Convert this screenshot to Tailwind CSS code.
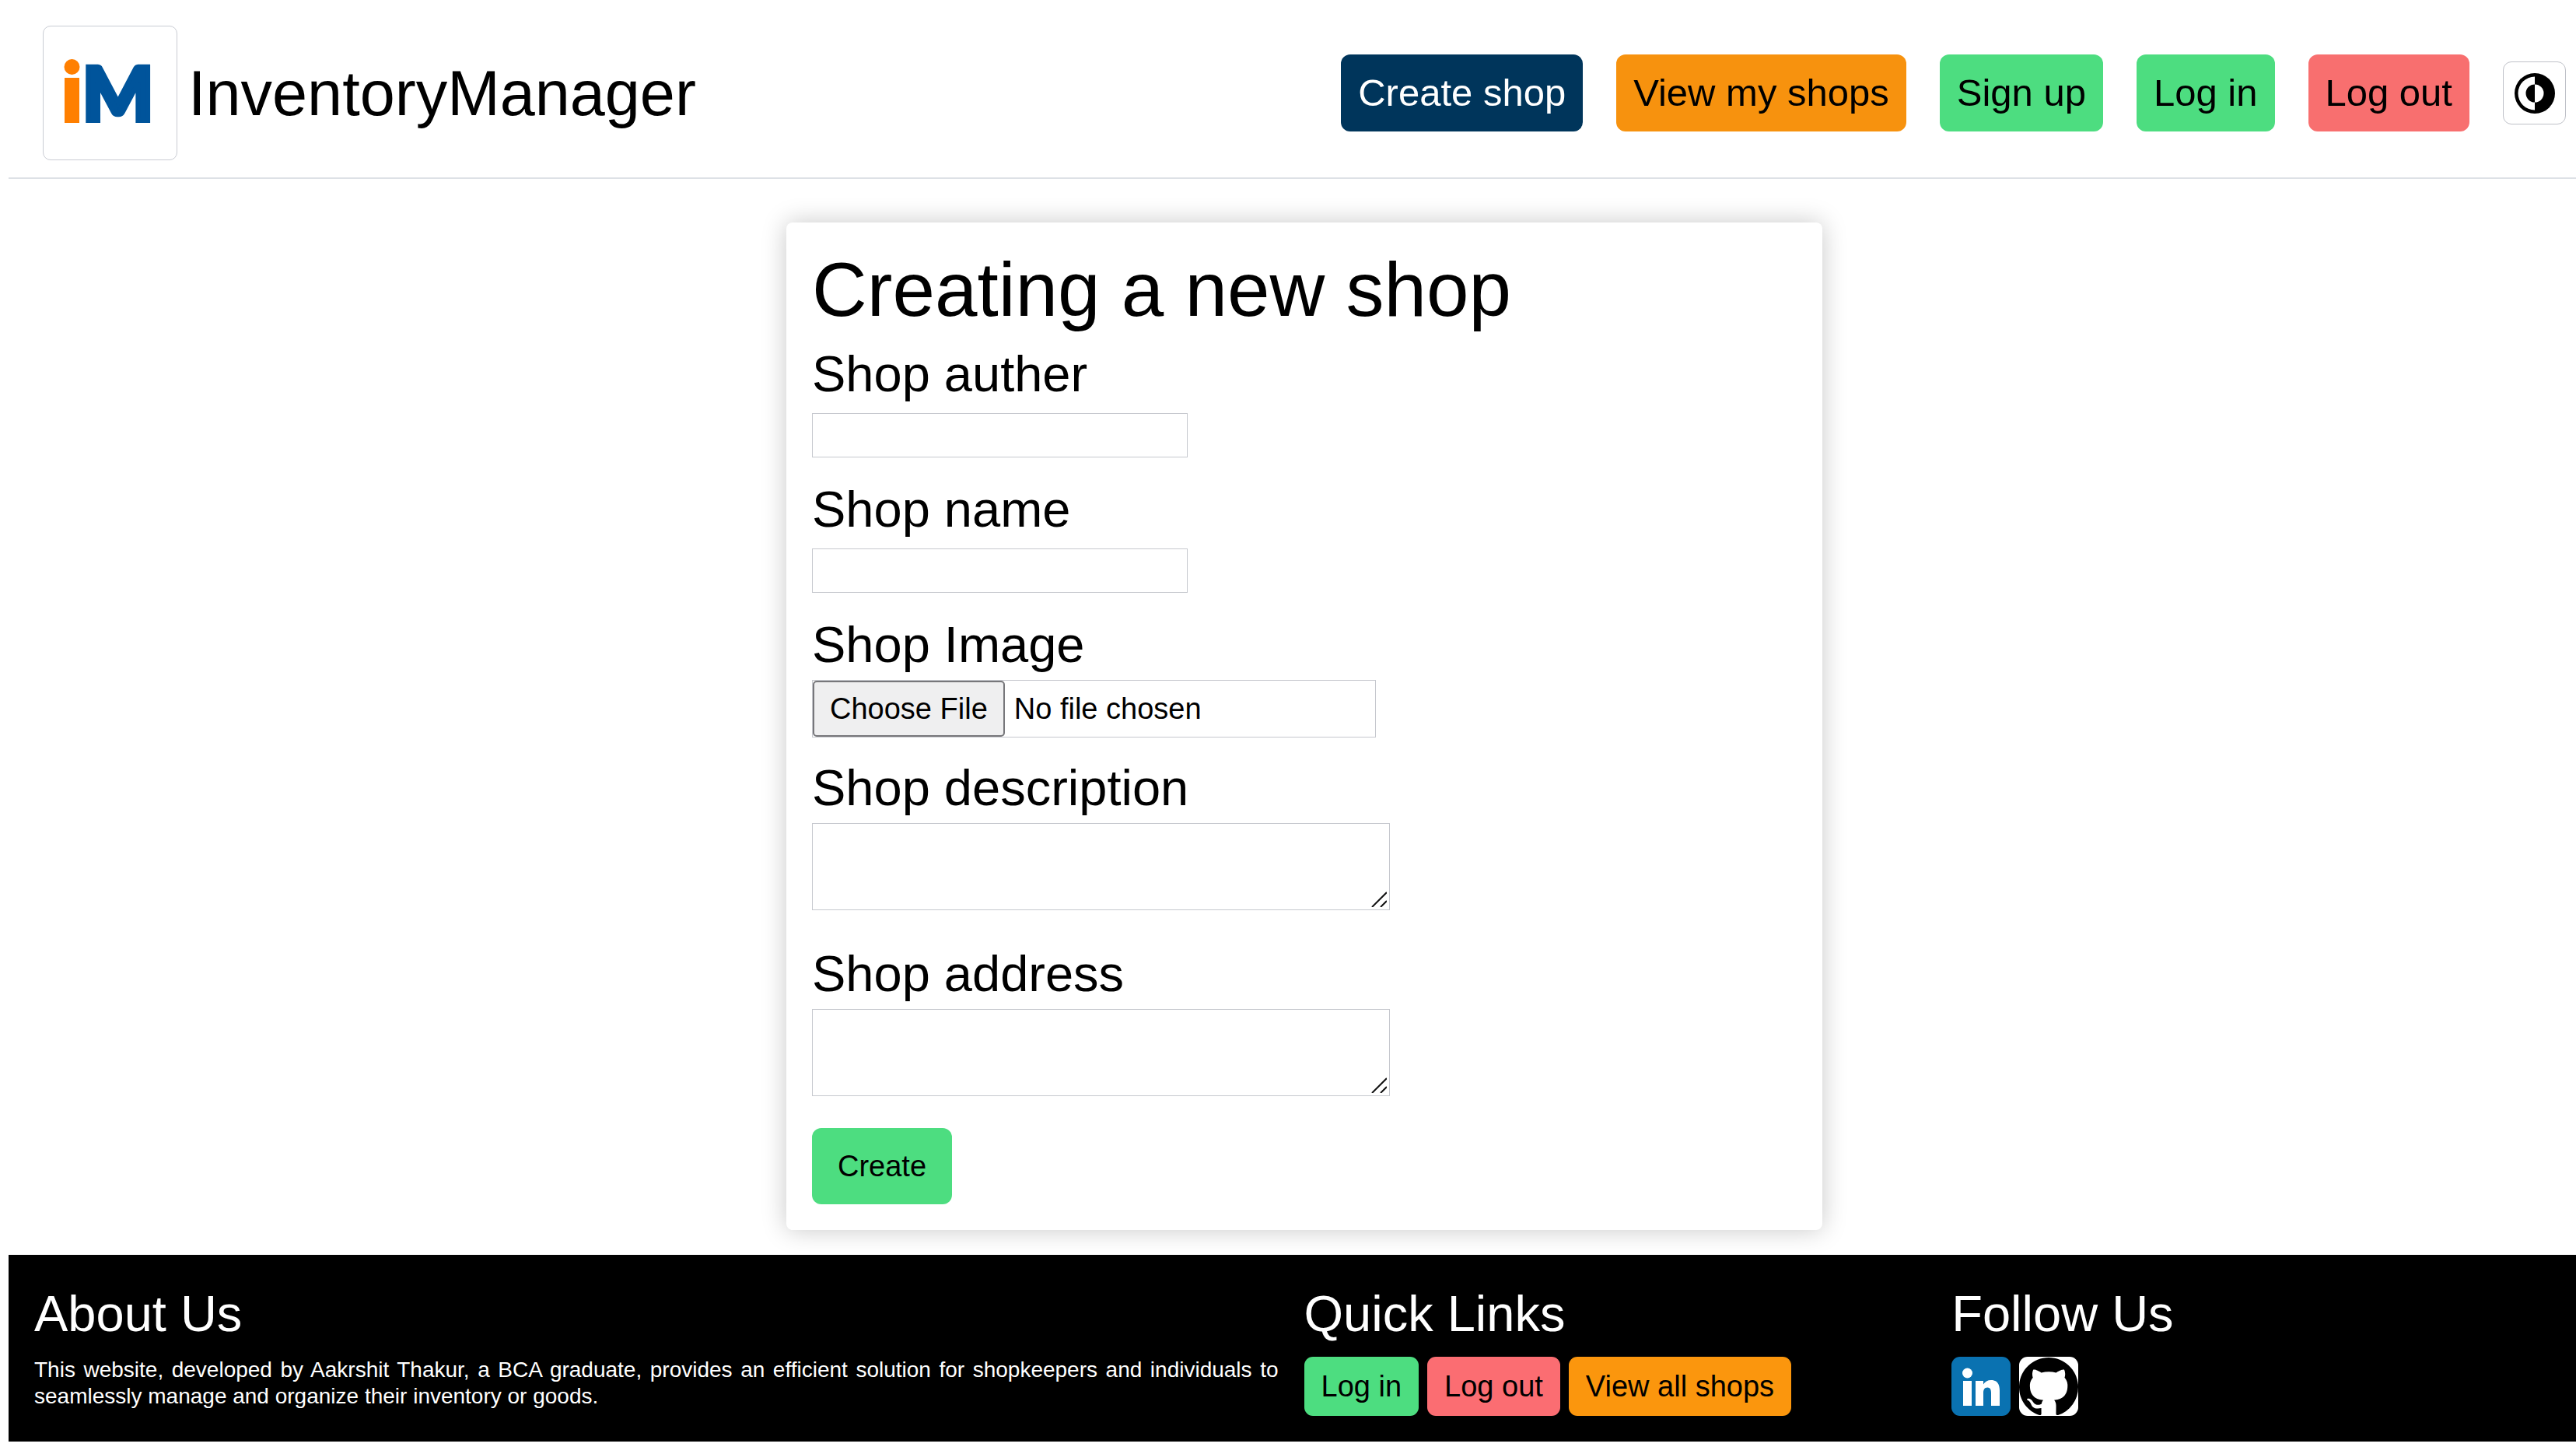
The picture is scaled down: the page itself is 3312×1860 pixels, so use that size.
<!DOCTYPE html>
<html lang="en">
<head>
<meta charset="utf-8">
<meta name="viewport" content="width=device-width, initial-scale=1">
<title>InventoryManager</title>
<script src="https://cdn.jsdelivr.net/npm/@tailwindcss/browser@4"></script>
</head>
<body class="bg-white pl-[11px] font-['Liberation_Sans',Arial,sans-serif] text-black">

<header class="flex items-center justify-between border-b-2 border-[#dde1e6] pt-[33px] pr-[13px] pb-[22px] pl-[44px]">
  <a href="#" class="flex items-center gap-[14px]">
    <svg class="size-[173px] rounded-[10px] border border-[#c9ccd3]" viewBox="0 0 171 171" role="img" aria-label="iM">
      <circle cx="36.5" cy="52" r="10" fill="#ff7f00"/>
      <rect x="27" y="66" width="19" height="58" fill="#ff7f00"/>
      <text x="50" y="121" stroke="#00549b" stroke-width="6" class="fill-[#00549b] font-['Lato',sans-serif] text-[96px] font-black">M</text>
    </svg>
    <span class="text-[81px] leading-[98px]">InventoryManager</span>
  </a>
  <nav class="flex items-center gap-[43px] text-[49px] leading-[55px]">
    <a href="#" class="rounded-[12px] bg-[#00355b] px-[22px] py-[22px] text-white">Create shop</a>
    <a href="#" class="rounded-[12px] bg-[#f7920e] px-[22px] py-[22px]">View my shops</a>
    <a href="#" class="rounded-[12px] bg-[#4ddd80] px-[22px] py-[22px]">Sign up</a>
    <a href="#" class="rounded-[12px] bg-[#4ddd80] px-[22px] py-[22px]">Log in</a>
    <a href="#" class="rounded-[12px] bg-[#f86f6f] px-[22px] py-[22px]">Log out</a>
    <button type="button" aria-label="Toggle theme" class="flex size-[81px] items-center justify-center rounded-[11px] border border-[#bfc1c8]">
      <svg class="size-[54px]" viewBox="0 0 54 54">
        <circle cx="27" cy="27" r="26" fill="#000"/>
        <path d="M27 5.500A21.500 21.500 0 0 0 27 48.500V38.500A11.500 11.500 0 0 1 27 15.500Z" fill="#fff"/>
        <path d="M27 15.500A11.500 11.500 0 0 1 27 38.500Z" fill="#fff"/>
      </svg>
    </button>
  </nav>
</header>

<main class="flex justify-center pt-[56px] pb-[32px] pl-[31px]">
  <form class="flex w-full max-w-[1332px] flex-col items-start rounded-[8px] bg-white p-[33px] shadow-[0_0_32px_rgba(0,0,0,0.22)]">
    <h1 class="text-[98px] leading-[106px]">Creating a new shop</h1>

    <label for="author" class="mt-[18px] text-[65px] leading-[76px]">Shop auther</label>
    <input id="author" type="text" class="mt-[12px] h-[57px] w-[483px] border border-[#c6c8ce] px-2 text-[38px]">

    <label for="name" class="mt-[29px] text-[65px] leading-[76px]">Shop name</label>
    <input id="name" type="text" class="mt-[12px] h-[57px] w-[483px] border border-[#c6c8ce] px-2 text-[38px]">

    <label for="image" class="mt-[29px] text-[65px] leading-[76px]">Shop Image</label>
    <input id="image" type="file" class="mt-[7px] h-[74px] w-[725px] border border-[#c6c8ce] text-[38px] leading-[44px] file:mr-[12px] file:h-[72px] file:rounded-[5px] file:border-2 file:border-solid file:border-[#77777b] file:bg-[#efeff0] file:px-[20px]">

    <label for="description" class="mt-[27px] text-[65px] leading-[76px]">Shop description</label>
    <div class="relative mt-[7px]">
      <textarea id="description" class="block h-[112px] w-[743px] resize-none border border-[#c6c8ce] px-2 text-[38px]"></textarea>
      <svg class="pointer-events-none absolute right-[4px] bottom-[4px] size-[20px]" viewBox="0 0 20 20" fill="none" stroke="#111" stroke-width="2"><path d="M1 20 20 1M12 20l8-8"/></svg>
    </div>

    <label for="address" class="mt-[44px] text-[65px] leading-[76px]">Shop address</label>
    <div class="relative mt-[7px]">
      <textarea id="address" class="block h-[112px] w-[743px] resize-none border border-[#c6c8ce] px-2 text-[38px]"></textarea>
      <svg class="pointer-events-none absolute right-[4px] bottom-[4px] size-[20px]" viewBox="0 0 20 20" fill="none" stroke="#111" stroke-width="2"><path d="M1 20 20 1M12 20l8-8"/></svg>
    </div>

    <button type="submit" class="mt-[41px] rounded-[12px] bg-[#4ddd80] px-[33px] py-[27px] text-[38px] leading-[44px]">Create</button>
  </form>
</main>

<footer class="grid grid-cols-[2fr_1fr_1fr] gap-[33px] bg-black py-[33px] pr-[3px] pl-[33px] text-white">
  <section>
    <h2 class="text-[65px] leading-[86px]">About Us</h2>
    <p class="mt-[12px] text-justify text-[28px] leading-[34px]">This website, developed by Aakrshit Thakur, a BCA graduate, provides an efficient solution for shopkeepers and individuals to seamlessly manage and organize their inventory or goods.</p>
  </section>
  <section>
    <h2 class="text-[65px] leading-[86px]">Quick Links</h2>
    <div class="mt-[12px] flex gap-[11px] text-[38px] leading-[44px] text-black">
      <a href="#" class="rounded-[11px] bg-[#4ddd80] px-[22px] py-[16px]">Log in</a>
      <a href="#" class="rounded-[11px] bg-[#fb6d72] px-[22px] py-[16px]">Log out</a>
      <a href="#" class="rounded-[11px] bg-[#fb960d] px-[22px] py-[16px]">View all shops</a>
    </div>
  </section>
  <section>
    <h2 class="text-[65px] leading-[86px]">Follow Us</h2>
    <div class="mt-[12px] flex gap-[11px]">
      <a href="#" aria-label="LinkedIn" class="size-[76px] overflow-hidden rounded-[11px] bg-[#0a72b1]">
        <svg class="size-full" viewBox="0 0 76 76" fill="#fff">
          <circle cx="20.500" cy="21" r="6.500"/>
          <rect x="15" y="31" width="11" height="32"/>
          <path d="M31 31h10v4.500c2-3.500 5.500-5.500 10-5.500 8.500 0 11 6 11 14V63H51V46.500c0-4-1-7-4.700-7-3.800 0-5.300 2.800-5.300 7V63H31z"/>
        </svg>
      </a>
      <a href="#" aria-label="GitHub" class="size-[76px] overflow-hidden rounded-[11px] bg-white">
        <svg class="size-full" viewBox="0 0 16 16" fill="#000"><path d="M8 .2C3.580.2 0 3.780 0 8.200c0 3.540 2.290 6.530 5.470 7.590.4.070.55-.17.55-.38 0-.19-.01-.82-.01-1.490-2.010.37-2.530-.49-2.690-.94-.09-.23-.48-.94-.82-1.130-.28-.15-.68-.52-.01-.53.63-.01 1.080.58 1.230.82.720 1.210 1.870.870 2.330.66.070-.52.280-.87.510-1.070-1.780-.2-3.640-.89-3.640-3.950 0-.87.310-1.590.820-2.150-.08-.2-.36-1.020.08-2.120 0 0 .67-.21 2.200.82.640-.18 1.320-.27 2-.27s1.360.09 2 .27c1.530-1.040 2.200-.82 2.200-.82.440 1.100.16 1.920.08 2.120.51.560.82 1.270.82 2.150 0 3.070-1.870 3.750-3.650 3.950.29.25.54.730.54 1.480 0 1.070-.01 1.930-.01 2.200 0 .21.150.46.550.38A8.010 8.010 0 0 0 16 8.200c0-4.420-3.580-8-8-8z"/></svg>
      </a>
    </div>
  </section>
</footer>

</body>
</html>
